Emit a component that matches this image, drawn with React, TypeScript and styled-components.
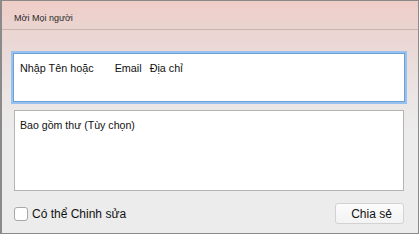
import styled, { createGlobalStyle } from "styled-components";

const GlobalStyle = createGlobalStyle`
  html, body {
    margin: 0;
    padding: 0;
  }
  body {
    font-family: "Liberation Sans", Arial, sans-serif;
  }
`;

const Window = styled.div`
  box-sizing: border-box;
  width: 419px;
  height: 234px;
  border: 1px solid #8a8a8a;
  border-left-width: 2px;
  display: flex;
  flex-direction: column;
  background: linear-gradient(to bottom, #f1d4cf 0px, #ead7d4 40px, #ebe4e3 90px, #ececec 130px, #ececec 100%);
`;

const TitleBar = styled.div`
  height: 29px;
  flex-shrink: 0;
  border-bottom: 1px solid #c9b3af;
  display: flex;
  align-items: center;
  padding-left: 12px;
  padding-top: 5px;
  box-sizing: border-box;
  font-size: 9px;
  color: #2a2a2a;
  background: linear-gradient(to bottom, #f0cdc7, #ead4d0);
`;

const Body = styled.div`
  flex: 1;
  display: flex;
  flex-direction: column;
  padding: 21px 13px 0 9px;
`;

const RecipientBox = styled.div`
  box-sizing: border-box;
  height: 49px;
  background: #fff;
  border: 1px solid #6d9fd8;
  box-shadow: 0 0 0 2px #97c1ee;
  margin: 2px 0 0 2px;
  padding: 8px 6px 0;
  font-size: 10.8px;
  color: #111;
  display: flex;
`;

const Gap = styled.span<{ $w: number }>`
  display: inline-block;
  width: ${(p) => p.$w}px;
`;

const MessageBox = styled.div`
  box-sizing: border-box;
  height: 81px;
  margin: 8px 1px 0 3px;
  background: #fff;
  border: 1px solid #b4b4b4;
  padding: 8px 5px 0;
  font-size: 10.6px;
  color: #111;
`;

const Footer = styled.div`
  display: flex;
  align-items: center;
  justify-content: space-between;
  margin: 12px 1px 0 3px;
`;

const CheckLabel = styled.label`
  display: flex;
  align-items: center;
  gap: 4px;
  font-size: 12px;
  color: #111;
`;

const CheckBox = styled.span`
  box-sizing: border-box;
  width: 14px;
  height: 14px;
  border: 1px solid #a8a8a8;
  border-radius: 3px;
  background: #fff;
`;

const ShareButton = styled.button`
  box-sizing: border-box;
  width: 69px;
  height: 21px;
  border: 1px solid #d2d2d2;
  border-radius: 3px;
  background: linear-gradient(#fbfbfb, #f3f3f3);
  font-family: "Liberation Sans", Arial, sans-serif;
  font-size: 12px;
  color: #111;
  padding: 0 0 0 4px;
`;

export default function App() {
  return (
    <>
      <GlobalStyle />
      <Window>
        <TitleBar>Mời Mọi người</TitleBar>
        <Body>
          <RecipientBox>
            Nhập Tên hoặc<Gap $w={21} />Email<Gap $w={8} />Địa chỉ
          </RecipientBox>
          <MessageBox>Bao gồm thư (Tùy chọn)</MessageBox>
          <Footer>
            <CheckLabel>
              <CheckBox />
              Có thể Chinh sửa
            </CheckLabel>
            <ShareButton>Chia sẻ</ShareButton>
          </Footer>
        </Body>
      </Window>
    </>
  );
}
